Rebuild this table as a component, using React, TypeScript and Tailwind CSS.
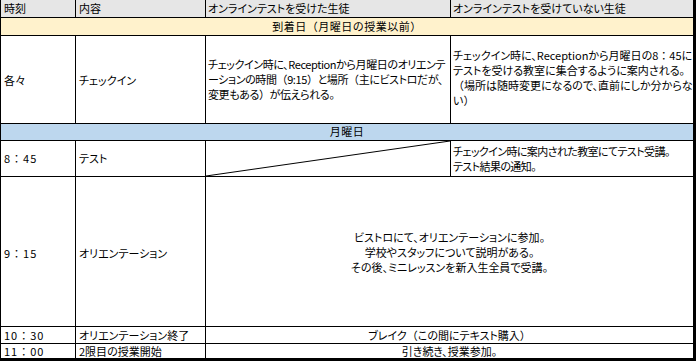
import React from "react";

const font = {
  fontFamily: '"Noto Sans CJK JP", "Noto Sans", sans-serif',
};

function W({ children }: { children: React.ReactNode }) {
  return <span className="[font-feature-settings:normal]">{children}</span>;
}

function Time({ t }: { t: string }) {
  const [a, b] = t.split(":");
  return (
    <span className="[font-feature-settings:normal] tracking-[1px]">
      {a}：{b}
    </span>
  );
}

export default function App() {
  const cell = "border-r border-b border-black overflow-hidden whitespace-nowrap";
  const lastCell = "border-b border-black overflow-hidden whitespace-nowrap";
  return (
    <div className="bg-white w-[698px] h-[363px]" style={font}>
      <div className="w-[696px] border-l border-r-[3px] border-b-[3px] border-black grid grid-cols-[75px_130px_245px_242px] grid-rows-[18px_18px_88px_17px_36px_150px_17px_14px] text-[11px] leading-[15px] text-black [font-feature-settings:'palt']">
        {/* header */}
        <div className={`${cell} bg-[#e6e6e6] flex items-end pl-[3px] pb-[1px]`}>時刻</div>
        <div className={`${cell} bg-[#e6e6e6] flex items-end pl-[3px] pb-[1px]`}>内容</div>
        <div className={`${cell} bg-[#e6e6e6] flex items-end pl-[2px] pb-[1px]`}>オンラインテストを受けた生徒</div>
        <div className={`${lastCell} bg-[#e6e6e6] flex items-end pl-[2px] pb-[1px]`}>オンラインテストを受けていない生徒</div>

        {/* arrival day */}
        <div className={`${lastCell} col-span-4 bg-[#fff2cc] flex items-end justify-center pb-[1px] tracking-[0.5px] [font-feature-settings:normal]`}>
          到着日（月曜日の授業以前）
        </div>

        {/* check-in */}
        <div className={`${cell} flex items-center pl-[3px] pt-[2px]`}>各々</div>
        <div className={`${cell} flex items-center pl-[3px] pt-[2px]`}>チェックイン</div>
        <div className={`${cell} flex items-center pl-[2px] tracking-[-0.4px]`}>
          <div>
            チェックイン時に、Receptionから月曜日のオリエンテ
            <br />
            ーションの時間<W>（</W>9:15<W>）</W>と場所<W>（</W>主にビストロだが、
            <br />
            変更もある<W>）</W>が伝えられる。
          </div>
        </div>
        <div className={`${lastCell} flex items-center pl-[2px] pb-[4px]`}>
          <div>
            チェックイン時に、Receptionから月曜日の8<W>：</W>45に
            <br />
            テストを受ける教室に集合するように案内される。
            <br />
            <W>（</W>場所は随時変更になるので、直前にしか分からな
            <br />
            い<W>）</W>
          </div>
        </div>

        {/* monday */}
        <div className={`${lastCell} col-span-4 bg-[#bdd7ee] flex items-end justify-center pb-[1px] tracking-[0.5px]`}>
          月曜日
        </div>

        {/* 8:45 */}
        <div className={`${cell} flex items-center pl-[3px]`}>
          <Time t="8:45" />
        </div>
        <div className={`${cell} flex items-center pl-[3px]`}>テスト</div>
        <div className={`${cell} relative`}>
          <svg className="absolute inset-0 w-full h-full" preserveAspectRatio="none" viewBox="0 0 100 100">
            <line x1="0" y1="100" x2="100" y2="0" stroke="black" strokeWidth="1" vectorEffect="non-scaling-stroke" />
          </svg>
        </div>
        <div className={`${lastCell} flex items-center pl-[2px]`}>
          <div>
            <span className="tracking-[-0.6px]">チェックイン時に案内された教室にてテスト受講。</span>
            <br />
            <span className="tracking-[-0.6px]">テスト結果の通知。</span>
          </div>
        </div>

        {/* 9:15 */}
        <div className={`${cell} flex items-center pl-[3px] pt-[4px]`}>
          <Time t="9:15" />
        </div>
        <div className={`${cell} flex items-center pl-[3px] pt-[4px]`}>オリエンテーション</div>
        <div className={`${lastCell} col-span-2 flex items-center justify-center text-center pt-[1px]`}>
          <div>
            ビストロにて、オリエンテーションに参加。
            <br />
            学校やスタッフについて説明がある。
            <br />
            その後、ミニレッスンを新入生全員で受講。
          </div>
        </div>

        {/* 10:30 */}
        <div className={`${cell} flex items-end pl-[3px]`}>
          <Time t="10:30" />
        </div>
        <div className={`${cell} flex items-end pl-[3px]`}>オリエンテーション終了</div>
        <div className={`${lastCell} col-span-2 flex items-end justify-center`}>
          ブレイク<W>（</W>この間にテキスト購入<W>）</W>
        </div>

        {/* 11:00 */}
        <div className="border-r border-black overflow-hidden whitespace-nowrap flex items-end pl-[3px] leading-[14px]">
          <Time t="11:00" />
        </div>
        <div className="border-r border-black overflow-hidden whitespace-nowrap flex items-end pl-[3px] leading-[14px]">2限目の授業開始</div>
        <div className="col-span-2 overflow-hidden whitespace-nowrap flex items-end justify-center leading-[14px]">引き続き、授業参加。</div>
      </div>
    </div>
  );
}
